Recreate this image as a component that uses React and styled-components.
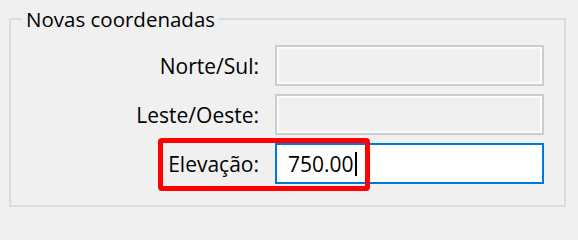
import React from "react";
import styled, { createGlobalStyle } from "styled-components";

const Global = createGlobalStyle`
  html, body { margin: 0; padding: 0; background: #f0f0f0; }
  body { font-family: "Open Sans", "Noto Sans", Arial, sans-serif; color: #000; }
  * { box-sizing: border-box; }
`;

const Page = styled.div`
  width: 578px;
  height: 223px;
  overflow: hidden;
  padding: 7px 12px 0 9px;
  background: #f0f0f0;
`;

const GroupBox = styled.fieldset`
  margin: 0;
  padding: 14px 20px 22px 0;
  border: 2px solid #dcdcdc;
  min-width: 0;
  height: 200px;
  display: flex;
  flex-direction: column;
  gap: 8px;
`;

const Legend = styled.legend`
  margin-left: 11px;
  padding: 0 4px;
  font-size: 20.5px;
  line-height: 24px;
`;

const Row = styled.div`
  position: relative;
  display: flex;
  align-items: center;
  gap: 16px;
  height: 41px;
`;

const Label = styled.div`
  width: 248px;
  text-align: right;
  font-size: 21px;
  line-height: 24px;
  white-space: nowrap;
`;

const TextBox = styled.div`
  width: 269px;
  height: 41px;
  display: flex;
  align-items: center;
  padding-left: 11px;
  font-size: 21px;
  background: ${(p) => (p.$active ? "#ffffff" : "#f0f0f0")};
  border: 2px solid ${(p) => (p.$active ? "#0078d7" : "#cccccc")};
  box-shadow: ${(p) => (p.$active ? "none" : "inset 0 0 0 1.5px #ffffff")};
`;

const Caret = styled.span`
  display: inline-block;
  width: 2px;
  height: 24px;
  margin-left: 1px;
  background: #000;
`;

const Highlight = styled.div`
  position: absolute;
  left: 147px;
  top: -5px;
  width: 212px;
  height: 53px;
  border: 5px solid #ff0000;
  border-radius: 4px;
  pointer-events: none;
`;

export default function App() {
  return (
    <>
      <Global />
      <Page>
        <GroupBox>
          <Legend>Novas coordenadas</Legend>
          <Row>
            <Label>Norte/Sul:</Label>
            <TextBox />
          </Row>
          <Row>
            <Label>Leste/Oeste:</Label>
            <TextBox />
          </Row>
          <Row>
            <Label>Elevação:</Label>
            <TextBox $active>
              750.00
              <Caret />
            </TextBox>
            <Highlight />
          </Row>
        </GroupBox>
      </Page>
    </>
  );
}
